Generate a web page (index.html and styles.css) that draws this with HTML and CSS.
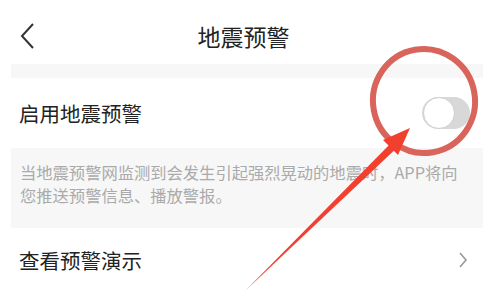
FILE: index.html
```html
<!DOCTYPE html>
<html lang="zh">
<head>
<meta charset="utf-8">
<link rel="stylesheet" href="styles.css">
</head>
<body>
<div class="page">
  <header class="nav">
    <svg class="back" width="18" height="30" viewBox="0 0 18 30"><path d="M15 4 L4 16 L15 28" fill="none" stroke="#333" stroke-width="2"/></svg>
    <h1 class="title">地震预警</h1>
  </header>
  <div class="gap"></div>
  <div class="row row-switch">
    <span class="label">启用地震预警</span>
    <span class="switch"><span class="knob"></span></span>
  </div>
  <div class="desc">当地震预警网监测到会发生引起强烈晃动的地震时，APP将向您推送预警信息、播放警报。</div>
  <div class="row row-link">
    <span class="label">查看预警演示</span>
    <svg class="chev" width="10" height="18" viewBox="0 0 10 18"><path d="M2 2 L8 9 L2 16" fill="none" stroke="#999" stroke-width="1.6"/></svg>
  </div>
  <svg class="annot" width="483" height="291" viewBox="0 0 483 291">
    <ellipse cx="424" cy="101" rx="51" ry="52" fill="none" stroke="#d8645b" stroke-width="6" transform="rotate(-10 424 101)"/>
    <polygon points="410,128 383,140 398,155" fill="#f2402f"/>
    <polygon points="245,291 401,144 395,139" fill="#f2402f"/>
  </svg>
</div>
</body>
</html>
```
FILE: styles.css
```css
* { box-sizing: border-box; }
html, body { margin: 0; padding: 0; background: #fff; }
body { font-family: "Noto Sans CJK SC", "Noto Sans", sans-serif; }
.page { position: relative; width: 483px; height: 291px; overflow: hidden; background: #fff; }
.nav { height: 64px; display: flex; align-items: center; justify-content: center; position: relative; }
.back { position: absolute; left: 18px; top: 20px; }
.title { margin: 0; font-size: 23px; font-weight: 400; color: #222; line-height: 1; margin-top: 8px; margin-left: 4px; }
.gap { height: 14px; margin-left: 11px; background: #f7f7f7; }
.row { display: flex; align-items: center; justify-content: space-between; padding: 0 13px 0 19px; }
.row-switch { height: 70px; }
.row-link { height: 63px; }
.label { font-size: 20.5px; color: #222; }
.switch { width: 48px; height: 32px; border-radius: 16px; background: #d8d8d8; position: relative; display: block; }
.knob { position: absolute; left: 1px; top: 0; width: 32px; height: 32px; border-radius: 50%; background: #fff; border: 1.5px solid #cfcfcf; }
.desc { height: 80px; margin-left: 11px; background: #f7f7f7; padding: 13px 24px 0 9px; font-size: 16.3px; line-height: 23px; color: #aaa; }
.chev { margin-right: 2px; }
.annot { position: absolute; left: 0; top: 0; pointer-events: none; }
```
